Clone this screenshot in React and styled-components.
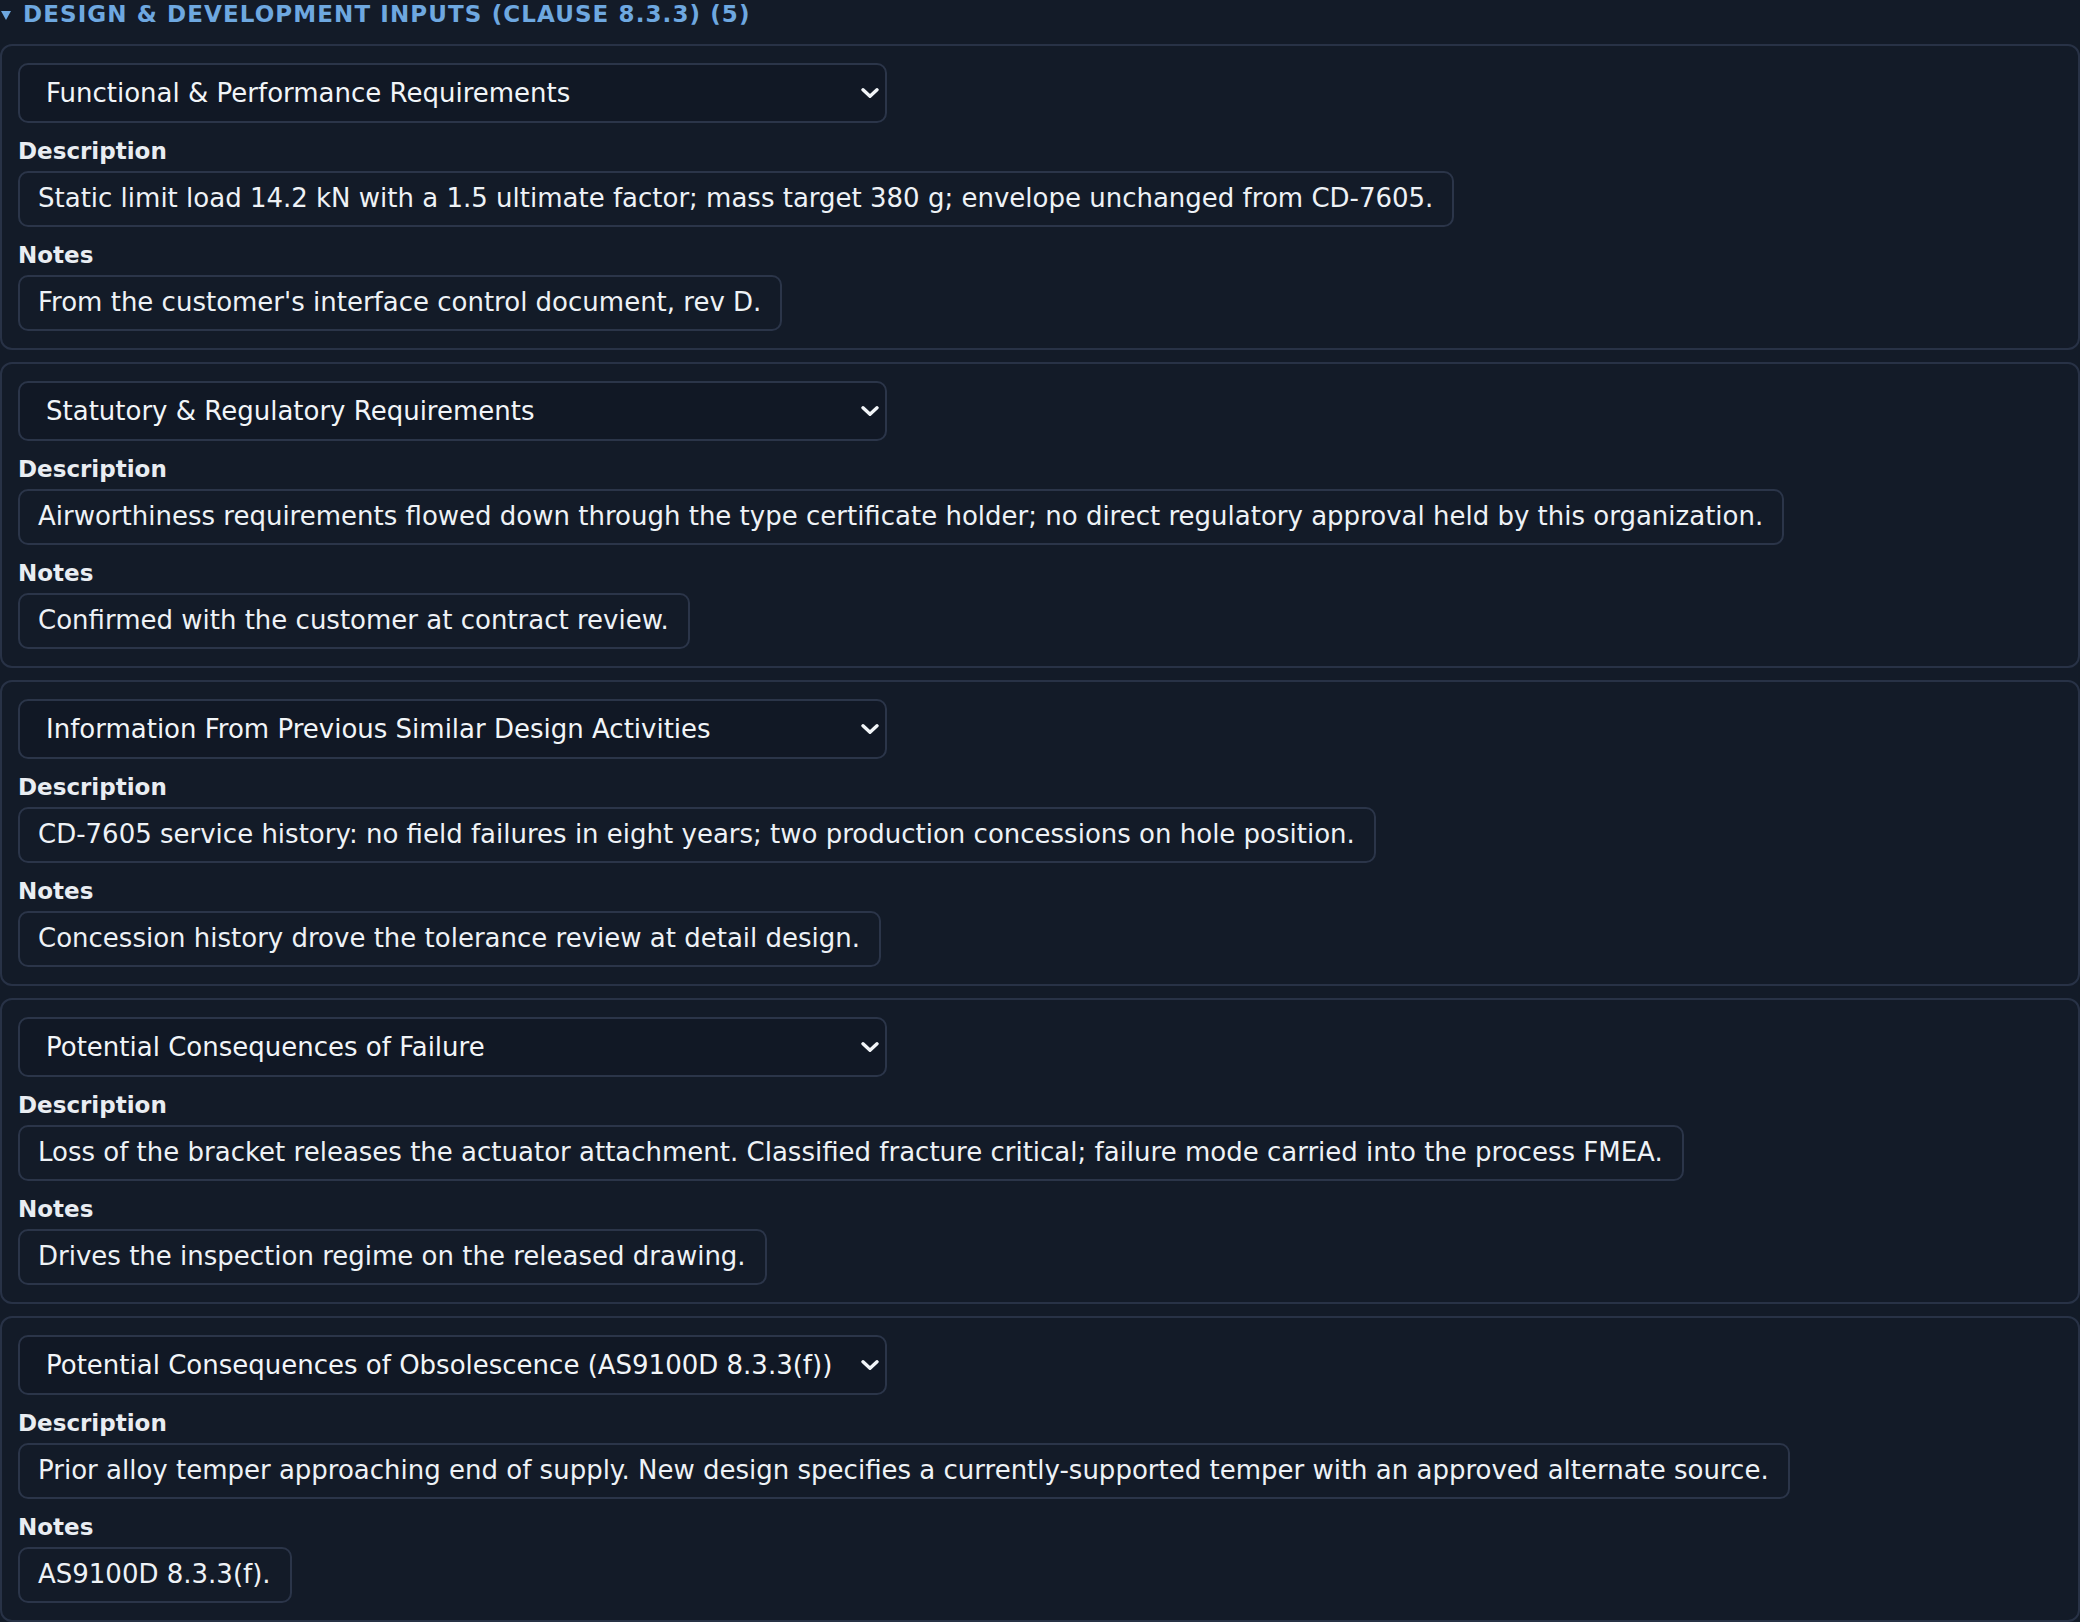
import React from "react";
import styled, { createGlobalStyle } from "styled-components";

const GlobalStyle = createGlobalStyle`
  html, body {
    margin: 0;
    padding: 0;
    background: #131b28;
  }
  body {
    font-family: "DejaVu Sans", "Liberation Sans", sans-serif;
    color: #eef2f6;
  }
  * { box-sizing: border-box; }
`;

const Section = styled.section`
  display: flex;
  flex-direction: column;
`;

const Heading = styled.div`
  display: flex;
  align-items: center;
  height: 28px;
  margin-bottom: 16px;
  font-size: 23px;
  font-weight: bold;
  text-transform: uppercase;
  letter-spacing: 1.1px;
  line-height: 28px;
  color: #6ea8e0;
`;

const Marker = styled.span`
  display: inline-block;
  width: 0;
  height: 0;
  margin: 3px 12px 0 1px;
  border-left: 5px solid transparent;
  border-right: 5px solid transparent;
  border-top: 9px solid #6ea8e0;
`;

const CardList = styled.div`
  display: flex;
  flex-direction: column;
  gap: 12px;
`;

const Card = styled.div`
  display: flex;
  flex-direction: column;
  align-items: flex-start;
  padding: 17px 16px 17px 16px;
  border: 2px solid #283246;
  border-radius: 12px;
`;

const SelectBox = styled.div`
  display: flex;
  align-items: center;
  justify-content: space-between;
  width: 869px;
  height: 60px;
  padding: 0 6px 0 26px;
  border: 2px solid #2b3549;
  border-radius: 10px;
  background: #111825;
  font-size: 26px;
  color: #f2f5f8;
  cursor: pointer;
`;

const SelectText = styled.span`
  white-space: nowrap;
`;

const Chevron = styled.svg`
  flex: none;
  width: 18px;
  height: 10px;
`;

const Field = styled.div`
  display: flex;
  flex-direction: column;
  align-items: flex-start;
  margin-top: 15px;
`;

const Label = styled.div`
  font-size: 23px;
  font-weight: bold;
  line-height: 26px;
  margin-bottom: 7px;
  color: #e9edf2;
`;

const ValueBox = styled.div`
  padding: 7px 19px 9px 18px;
  border: 2px solid #2b3549;
  border-radius: 10px;
  font-size: 26px;
  line-height: 36px;
  color: #eef2f6;
  white-space: nowrap;
`;

const items = [
  {
    type: "Functional & Performance Requirements",
    description:
      "Static limit load 14.2 kN with a 1.5 ultimate factor; mass target 380 g; envelope unchanged from CD-7605.",
    notes: "From the customer's interface control document, rev D.",
  },
  {
    type: "Statutory & Regulatory Requirements",
    description:
      "Airworthiness requirements flowed down through the type certificate holder; no direct regulatory approval held by this organization.",
    notes: "Confirmed with the customer at contract review.",
  },
  {
    type: "Information From Previous Similar Design Activities",
    description:
      "CD-7605 service history: no field failures in eight years; two production concessions on hole position.",
    notes: "Concession history drove the tolerance review at detail design.",
  },
  {
    type: "Potential Consequences of Failure",
    description:
      "Loss of the bracket releases the actuator attachment. Classified fracture critical; failure mode carried into the process FMEA.",
    notes: "Drives the inspection regime on the released drawing.",
  },
  {
    type: "Potential Consequences of Obsolescence (AS9100D 8.3.3(f))",
    description:
      "Prior alloy temper approaching end of supply. New design specifies a currently-supported temper with an approved alternate source.",
    notes: "AS9100D 8.3.3(f).",
  },
];

function TypeSelect({ value }) {
  return (
    <SelectBox role="combobox" aria-expanded="false">
      <SelectText>{value}</SelectText>
      <Chevron viewBox="0 0 18 10" aria-hidden="true">
        <path
          d="M2 1.8 L9 8.2 L16 1.8"
          fill="none"
          stroke="#f2f5f8"
          strokeWidth="3.4"
          strokeLinecap="round"
          strokeLinejoin="round"
        />
      </Chevron>
    </SelectBox>
  );
}

export default function App() {
  return (
    <>
      <GlobalStyle />
      <Section>
        <Heading>
          <Marker />
          Design &amp; Development Inputs (Clause 8.3.3) (5)
        </Heading>
        <CardList>
          {items.map((it, i) => (
            <Card key={i}>
              <TypeSelect value={it.type} />
              <Field>
                <Label>Description</Label>
                <ValueBox>{it.description}</ValueBox>
              </Field>
              <Field>
                <Label>Notes</Label>
                <ValueBox>{it.notes}</ValueBox>
              </Field>
            </Card>
          ))}
        </CardList>
      </Section>
    </>
  );
}
